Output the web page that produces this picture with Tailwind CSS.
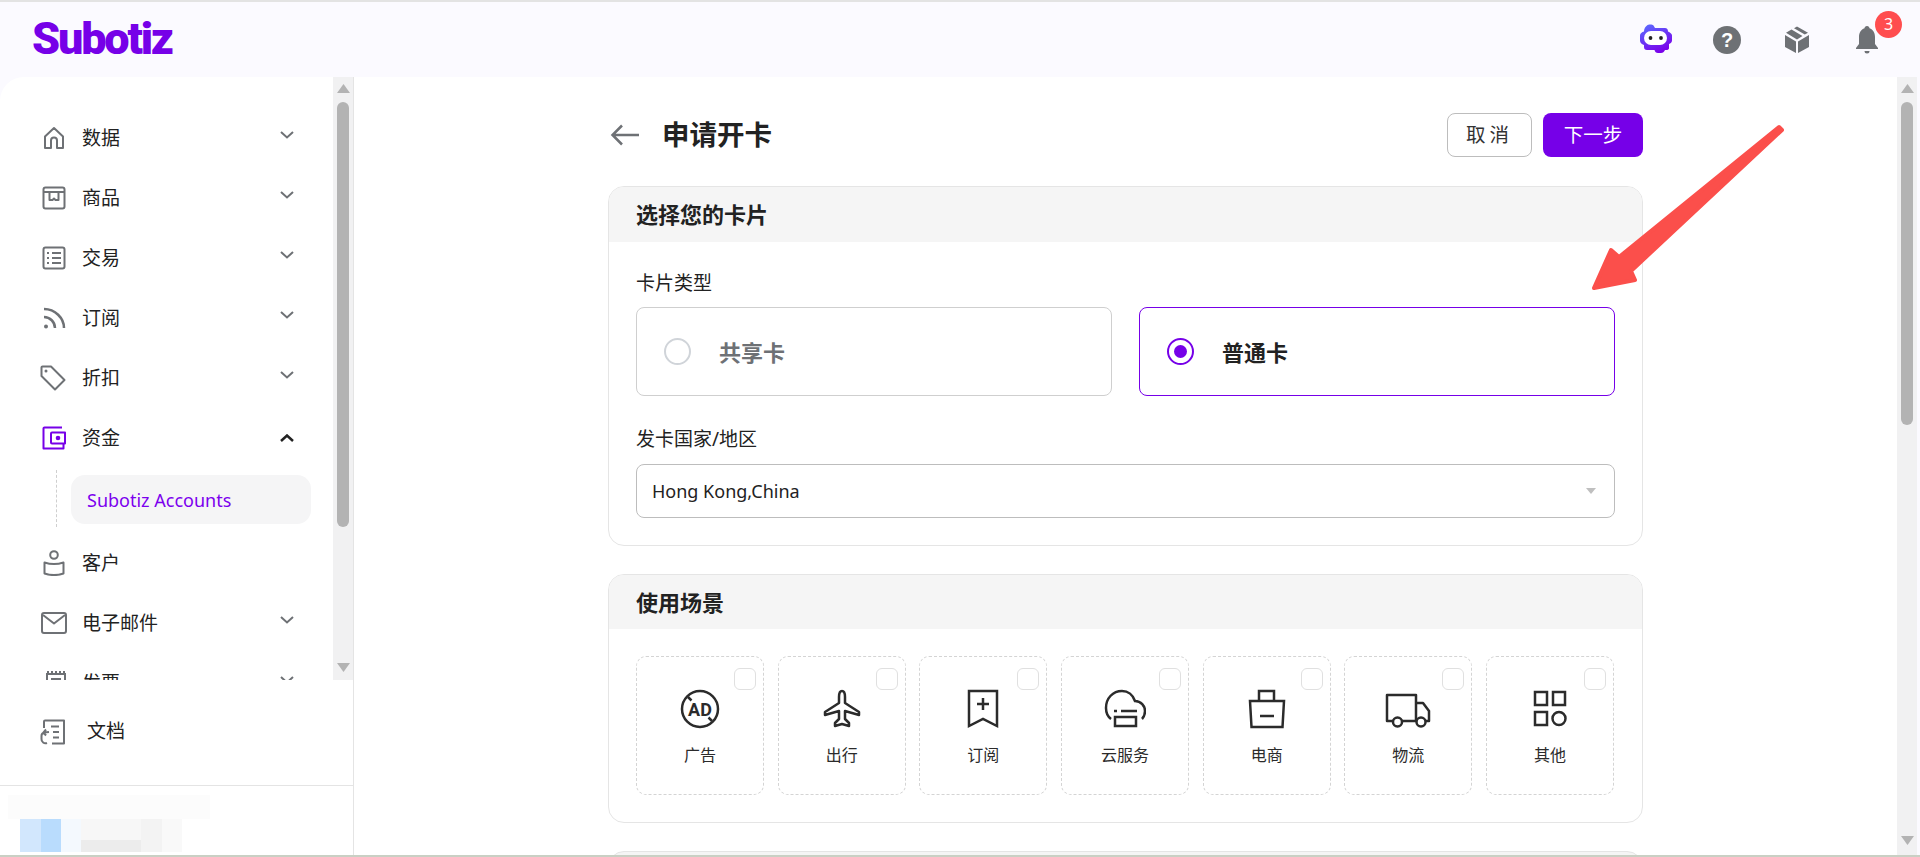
<!DOCTYPE html>
<html lang="zh-CN">
<head>
    <meta charset="UTF-8">
    <title>申请开卡 - Subotiz</title>
    <script src="https://cdn.jsdelivr.net/npm/@tailwindcss/browser@4"></script>
</head>
<body class="w-[1920px] h-[857px] overflow-hidden bg-[#fbfaff] text-[#222222] font-['Noto_Sans','Noto_Sans_CJK_SC',sans-serif]">
    <div class="h-[2px] bg-[#e3e3e3]"></div>

    <!-- Top bar -->
    <header class="h-[75px] flex items-center">
        <div class="ml-[32px] mt-[-2px] text-[45px] leading-none font-black tracking-[-2.200px] text-[#7600e8] font-['Roboto',sans-serif]">Subotiz</div>
        <div class="ml-auto flex items-center">
            <svg class="w-[32px] h-[29px] mr-[41px] mt-[-2px]" viewBox="0 0 32 29">
                <defs><linearGradient id="bot" x1="0.100" y1="0" x2="0.600" y2="1"><stop offset="0" stop-color="#5a6cff"/><stop offset="1" stop-color="#7a00ea"/></linearGradient></defs>
                <path d="M7 1.500C8 .500 12 0 13.500 1.500L15 4h10c2 0 3 1.500 3 3.500 2 1 4 2 4 4v5c0 2-1.500 3-3 3.500V24c0 1.500-1 2-3 2h-1c-1 2-2 3-4 3h-3c-2 0-3-1-3.500-3H7c-2 0-3-1-3-3v-2C1.500 20 0 18.500 0 16.500v-5C0 9.500 2 8 4 7.500 4 4.500 5.500 2.500 7 1.500z" fill="url(#bot)"/>
                <rect x="4" y="7" width="23" height="14" rx="7" fill="#fff"/>
                <circle cx="10.500" cy="14" r="1.900" fill="#222"/><circle cx="21" cy="14" r="1.900" fill="#222"/>
            </svg>
            <svg class="w-[28px] h-[28px] mr-[43px]" viewBox="0 0 28 28">
                <circle cx="14" cy="14" r="14" fill="#6e7175"/>
                <text x="14" y="21" text-anchor="middle" font-size="20" font-weight="700" fill="#fff" font-family="Liberation Sans">?</text>
            </svg>
            <svg class="w-[26px] h-[28px] mr-[45px]" viewBox="0 0 26 28">
                <path d="M1 9l11 6.500V27L1 21zM25 9l-11 6.500V27l11-6z" fill="#6e7175"/>
                <path d="M2 6.800 7.500 3.600 18.500 10 13 13.500zM10 2.200 13 .500l11 6.300-3.200 1.800z" fill="#6e7175"/>
            </svg>
            <div class="relative mr-[41px] w-[24px] h-[28px]">
                <svg class="w-[24px] h-[28px]" viewBox="0 0 24 28">
                    <path d="M12 0c1.500 0 2.500 1 2.500 2.300C18 3.500 20 7 20 11v7l3 4v1H1v-1l3-4v-7c0-4 2-7.500 5.500-8.700C9.500 1 10.500 0 12 0z" fill="#6e7175"/>
                    <path d="M9.500 25h5a2.500 2.500 0 0 1-5 0z" fill="#6e7175"/>
                </svg>
                <div class="absolute left-[20px] top-[-15px] w-[27px] h-[27px] rounded-full bg-[#ff4d4f] text-white text-[16px] leading-[27px] text-center">3</div>
            </div>
        </div>
    </header>

    <div class="h-[778px] flex">
        <!-- Sidebar -->
        <aside class="w-[354px] shrink-0 bg-white rounded-tl-[24px] border-r border-[#e4e4e4] flex flex-col">
            <div class="h-[603px] flex overflow-hidden">
                <nav class="w-[333px] pt-[31px] text-[19px] leading-[28px]">
                    <div class="h-[60px] flex items-center pl-[42px]">
                        <svg class="w-[24px] h-[24px] text-[#6e7175]" viewBox="0 0 24 24" fill="none" stroke="currentColor" stroke-width="2" stroke-linejoin="round"><path d="M3 10.500 12 2l9 8.500V22h-6v-7.500a3 3 0 0 0-6 0V22H3z"/></svg>
                        <span class="ml-[16px]">数据</span>
                        <svg class="ml-auto mr-[39px] mb-[6px] w-[14px] h-[8px] text-[#6e7175]" viewBox="0 0 14 8" fill="none" stroke="currentColor" stroke-width="2"><path d="m1 1 6 5.500L13 1"/></svg>
                    </div>
                    <div class="h-[60px] flex items-center pl-[42px]">
                        <svg class="w-[24px] h-[24px] text-[#6e7175]" viewBox="0 0 24 24" fill="none" stroke="currentColor" stroke-width="2" stroke-linejoin="round"><rect x="1.500" y="1.500" width="21" height="21" rx="2"/><path d="M1.500 6h21M7.500 6v8h3l1.500-1.500 1.500 1.500h3V6"/></svg>
                        <span class="ml-[16px]">商品</span>
                        <svg class="ml-auto mr-[39px] mb-[6px] w-[14px] h-[8px] text-[#6e7175]" viewBox="0 0 14 8" fill="none" stroke="currentColor" stroke-width="2"><path d="m1 1 6 5.500L13 1"/></svg>
                    </div>
                    <div class="h-[60px] flex items-center pl-[42px]">
                        <svg class="w-[24px] h-[24px] text-[#6e7175]" viewBox="0 0 24 24" fill="none" stroke="currentColor" stroke-width="2"><rect x="1.500" y="1.500" width="21" height="21" rx="2"/><path d="M10 7h9M10 12h9M10 17h9M5 7h2M5 12h2M5 17h2"/></svg>
                        <span class="ml-[16px]">交易</span>
                        <svg class="ml-auto mr-[39px] mb-[6px] w-[14px] h-[8px] text-[#6e7175]" viewBox="0 0 14 8" fill="none" stroke="currentColor" stroke-width="2"><path d="m1 1 6 5.500L13 1"/></svg>
                    </div>
                    <div class="h-[60px] flex items-center pl-[42px]">
                        <svg class="w-[24px] h-[24px] text-[#6e7175]" viewBox="0 0 24 24" fill="none" stroke="currentColor" stroke-width="2.500"><circle cx="4" cy="20.500" r="2" fill="currentColor" stroke="none"/><path d="M2 11c6 0 11 5 11 11M2 3c11 0 20 9 20 19"/></svg>
                        <span class="ml-[16px]">订阅</span>
                        <svg class="ml-auto mr-[39px] mb-[6px] w-[14px] h-[8px] text-[#6e7175]" viewBox="0 0 14 8" fill="none" stroke="currentColor" stroke-width="2"><path d="m1 1 6 5.500L13 1"/></svg>
                    </div>
                    <div class="h-[60px] flex items-center pl-[40px]">
                        <svg class="w-[26px] h-[26px] text-[#6e7175]" viewBox="0 0 26 26" fill="none" stroke="currentColor" stroke-width="2" stroke-linejoin="round"><path d="M1.500 2.500a1 1 0 0 1 1-1H11l13.500 13.500-9.500 9.500L1.500 11z"/><circle cx="6" cy="6" r="1.500" fill="currentColor" stroke="none"/></svg>
                        <span class="ml-[16px]">折扣</span>
                        <svg class="ml-auto mr-[39px] mb-[6px] w-[14px] h-[8px] text-[#6e7175]" viewBox="0 0 14 8" fill="none" stroke="currentColor" stroke-width="2"><path d="m1 1 6 5.500L13 1"/></svg>
                    </div>
                    <div class="h-[60px] flex items-center pl-[42px]">
                        <svg class="w-[25px] h-[24px] text-[#7600e8]" viewBox="0 0 25 24" fill="none" stroke="currentColor" stroke-width="2" stroke-linejoin="round"><path d="M20 1.500H2.500a1 1 0 0 0-1 1v20h20v-5"/><path d="M10 6.500h13v11H10a1 1 0 0 1-1-1v-9a1 1 0 0 1 1-1z"/><circle cx="16" cy="12" r="2.300" fill="currentColor" stroke="none"/></svg>
                        <span class="ml-[15px]">资金</span>
                        <svg class="ml-auto mr-[39px] mb-[1px] w-[14px] h-[8px] text-[#222222]" viewBox="0 0 14 8" fill="none" stroke="currentColor" stroke-width="2.500"><path d="m1 7 6-5.500L13 7"/></svg>
                    </div>
                    <div class="h-[65px] flex pl-[56px]">
                        <div class="mt-[2px] h-[57px] border-l border-dashed border-[#cfcfcf]"></div>
                        <div class="mt-[7px] ml-[14px] w-[240px] h-[49px] rounded-[14px] bg-[#f5f5f6] pl-[16px] text-[18px] leading-[50px] text-[#7c00ee]">Subotiz Accounts</div>
                    </div>
                    <div class="h-[60px] flex items-center pl-[42px]">
                        <svg class="w-[24px] h-[26px] text-[#6e7175]" viewBox="0 0 24 26" fill="none" stroke="currentColor" stroke-width="2" stroke-linejoin="round"><circle cx="12" cy="5" r="3.800"/><path d="M2.500 12.500c6 2 13 2 19 0v11c-6 2-13 2-19 0z"/></svg>
                        <span class="ml-[16px]">客户</span>
                    </div>
                    <div class="h-[60px] flex items-center pl-[41px]">
                        <svg class="w-[26px] h-[22px] text-[#6e7175]" viewBox="0 0 26 22" fill="none" stroke="currentColor" stroke-width="2" stroke-linejoin="round"><rect x="1" y="1" width="24" height="20" rx="2"/><path d="m2 3 11 8.500L24 3"/></svg>
                        <span class="ml-[15px]">电子邮件</span>
                        <svg class="ml-auto mr-[39px] mb-[6px] w-[14px] h-[8px] text-[#6e7175]" viewBox="0 0 14 8" fill="none" stroke="currentColor" stroke-width="2"><path d="m1 1 6 5.500L13 1"/></svg>
                    </div>
                    <div class="h-[60px] flex items-center pl-[46px]">
                        <svg class="w-[20px] h-[24px] text-[#6e7175]" viewBox="0 0 20 24" fill="none" stroke="currentColor" stroke-width="2"><path d="M1 3v20h18V3z"/><path d="M1 1h2M5 1h2M9 1h2M13 1h2M17 1h2M5 8h10M5 13h5"/></svg>
                        <span class="ml-[16px]">发票</span>
                        <svg class="ml-auto mr-[39px] mb-[6px] w-[14px] h-[8px] text-[#6e7175]" viewBox="0 0 14 8" fill="none" stroke="currentColor" stroke-width="2"><path d="m1 1 6 5.500L13 1"/></svg>
                    </div>
                </nav>
                <!-- Sidebar scrollbar -->
                <div class="w-[20px] bg-[#f1f1f2] flex flex-col items-center pt-[7px]">
                    <svg class="w-[13px] h-[9px] shrink-0" viewBox="0 0 13 9"><path d="M6.500 0 13 9H0z" fill="#b3b3b3"/></svg>
                    <div class="mt-[9px] w-[12px] h-[425px] rounded-full bg-[#b3b3b3]"></div>
                    <svg class="mt-auto mb-[8px] w-[13px] h-[9px] shrink-0" viewBox="0 0 13 9"><path d="M0 0h13L6.500 9z" fill="#b3b3b3"/></svg>
                </div>
            </div>
            <div class="h-[106px] shrink-0 flex items-center pl-[40px] pb-[2px] text-[19px] border-b border-[#e4e4e4]">
                <svg class="w-[26px] h-[26px] text-[#6e7175]" viewBox="0 0 26 26" fill="none" stroke="currentColor" stroke-width="2" stroke-linejoin="round"><path d="M4 9V2.500a1 1 0 0 1 1-1h19v23H12"/><path d="M11 7.500h8M13 13h6M13 18.500h6"/><path d="M9 13 4 13.500a3.500 3.500 0 0 0-2.500 3.500v3a4 4 0 0 0 5.500 4M6 10.500 3.500 13.500 6 16.500"/></svg>
                <span class="ml-[21px]">文档</span>
            </div>
            <!-- Blurred account block -->
            <div class="flex-1 pl-[8px] pt-[9px]">
                <div class="w-[202px] h-[24px] bg-[#fcfcfc]"></div>
                <div class="ml-[12px] flex h-[21px]">
                    <div class="w-[21px] bg-[#d2e7fd]"></div><div class="w-[20px] bg-[#b9dcfd]"></div><div class="w-[20px] bg-[#f4f9fe]"></div><div class="w-[60px] bg-[#f7f7f7]"></div><div class="w-[21px] bg-[#f3f3f3]"></div><div class="w-[20px] bg-[#f9f9f9]"></div>
                </div>
                <div class="ml-[12px] flex h-[12px]">
                    <div class="w-[21px] bg-[#d2e7fd]"></div><div class="w-[20px] bg-[#b9dcfd]"></div><div class="w-[20px] bg-[#f4f9fe]"></div><div class="w-[60px] bg-[#ececec]"></div><div class="w-[21px] bg-[#f3f3f3]"></div><div class="w-[20px] bg-[#f9f9f9]"></div>
                </div>
            </div>
        </aside>

        <!-- Main -->
        <main class="flex-1 bg-white flex overflow-hidden">
            <div class="relative w-[1543px] pl-[254px] pt-[36px]">
                <div class="w-[1035px] h-[44px] flex items-center">
                    <svg class="ml-[2px] w-[29px] h-[22px] text-[#6e7175]" viewBox="0 0 29 22" fill="none" stroke="currentColor" stroke-width="2.500"><path d="M29 11H3M12 1.500 2.500 11l9.500 9.500"/></svg>
                    <h1 class="ml-[23px] text-[27.500px] font-bold leading-none">申请开卡</h1>
                    <button class="ml-auto w-[85px] h-[44px] rounded-[8px] border border-[#bdbdbd] bg-white text-[19.500px] tracking-[4px] text-[#333333]">取消</button>
                    <button class="ml-[11px] w-[100px] h-[44px] rounded-[8px] bg-[#7600e8] text-[19.500px] text-white">下一步</button>
                </div>

                <section class="mt-[29px] w-[1035px] rounded-[16px] border border-[#e5e5e5] overflow-hidden">
                    <h2 class="h-[55px] bg-[#f5f5f5] pl-[27px] text-[22px] leading-[55px] font-bold">选择您的卡片</h2>
                    <div class="px-[27px] pt-[27px] pb-[27px] w-[1033px]">
                        <div class="text-[19px] leading-[28px]">卡片类型</div>
                        <div class="mt-[10px] w-[979px] flex gap-[27px]">
                            <div class="flex-1 h-[89px] rounded-[8px] border border-[#cfcfcf] flex items-center pl-[27px]">
                                <div class="w-[27px] h-[27px] rounded-full border-2 border-[#d0d4d9]"></div>
                                <span class="ml-[28px] mt-[2px] text-[22px] font-bold text-[#6e7175]">共享卡</span>
                            </div>
                            <div class="flex-1 h-[89px] rounded-[8px] border border-[#7600e8] flex items-center pl-[27px]">
                                <div class="w-[27px] h-[27px] rounded-full border-2 border-[#7600e8] flex items-center justify-center">
                                    <div class="w-[13px] h-[13px] rounded-full bg-[#7600e8]"></div>
                                </div>
                                <span class="ml-[28px] mt-[2px] text-[22px] font-bold">普通卡</span>
                            </div>
                        </div>
                        <div class="mt-[29px] text-[19px] leading-[28px]">发卡国家/地区</div>
                        <div class="mt-[11px] w-[979px] h-[54px] rounded-[8px] border border-[#bdbdbd] flex items-center pl-[15px] pr-[18px] text-[18px]">
                            <span>Hong Kong,China</span>
                            <svg class="ml-auto w-[10px] h-[6px]" viewBox="0 0 10 6"><path d="M0 0h10L5 6z" fill="#bfbfbf"/></svg>
                        </div>
                    </div>
                </section>

                <section class="mt-[28px] w-[1035px] rounded-[16px] border border-[#e5e5e5] overflow-hidden">
                    <h2 class="h-[54px] bg-[#f5f5f5] pl-[27px] text-[22px] leading-[54px] font-bold">使用场景</h2>
                    <div class="px-[27px] py-[27px] w-[1033px]">
                        <div class="w-[978px] grid grid-cols-7 gap-[13.500px] text-[16px] leading-[22px] text-[#2b2b2b]">
                            <div class="relative h-[139px] rounded-[10px] border border-dashed border-[#d4d4d4] flex flex-col items-center pt-[32px]">
                                <div class="absolute right-[7px] top-[11px] w-[22px] h-[22px] rounded-[6px] border border-[#e0e0e0]"></div>
                                <svg class="w-[40px] h-[40px]" viewBox="0 0 40 40" fill="none" stroke="#2b2b2b" stroke-width="2.500"><circle cx="20" cy="20" r="18"/><path d="m8 8 3.500 3.500M28.500 28.500 32 32"/><text x="20" y="26.500" text-anchor="middle" font-size="18" font-weight="700" fill="#2b2b2b" stroke="none" font-family="Roboto">AD</text></svg>
                                <span class="mt-[15px]">广告</span>
                            </div>
                            <div class="relative h-[139px] rounded-[10px] border border-dashed border-[#d4d4d4] flex flex-col items-center pt-[32px]">
                                <div class="absolute right-[7px] top-[11px] w-[22px] h-[22px] rounded-[6px] border border-[#e0e0e0]"></div>
                                <svg class="w-[40px] h-[40px]" viewBox="0 0 40 40" fill="none" stroke="#2b2b2b" stroke-width="2.500" stroke-linejoin="round"><path d="M20 2c2 0 3 3 3 6v6l14 9v3l-14-4v8l4 4v3l-7-2-7 2v-3l4-4v-8L3 26v-3l14-9V8c0-3 1-6 3-6z"/></svg>
                                <span class="mt-[15px]">出行</span>
                            </div>
                            <div class="relative h-[139px] rounded-[10px] border border-dashed border-[#d4d4d4] flex flex-col items-center pt-[32px]">
                                <div class="absolute right-[7px] top-[11px] w-[22px] h-[22px] rounded-[6px] border border-[#e0e0e0]"></div>
                                <svg class="w-[40px] h-[40px]" viewBox="0 0 40 40" fill="none" stroke="#2b2b2b" stroke-width="2.500"><path d="M6 2h28v35L20 30 6 37z"/><path d="M20 9v12M14 15h12"/></svg>
                                <span class="mt-[15px]">订阅</span>
                            </div>
                            <div class="relative h-[139px] rounded-[10px] border border-dashed border-[#d4d4d4] flex flex-col items-center pt-[32px]">
                                <div class="absolute right-[7px] top-[11px] w-[22px] h-[22px] rounded-[6px] border border-[#e0e0e0]"></div>
                                <svg class="w-[42px] h-[40px]" viewBox="0 0 42 40" fill="none" stroke="#2b2b2b" stroke-width="2.500"><path d="M7 30C3 27 2 23 2 19 2 9 9 2 18 2c6 0 11 4 13 10 6 0 10 5 10 10 0 3-1 6-3 8"/><path d="M10 22h3M17 22h16"/><rect x="11" y="28" width="21" height="9"/></svg>
                                <span class="mt-[15px]">云服务</span>
                            </div>
                            <div class="relative h-[139px] rounded-[10px] border border-dashed border-[#d4d4d4] flex flex-col items-center pt-[32px]">
                                <div class="absolute right-[7px] top-[11px] w-[22px] h-[22px] rounded-[6px] border border-[#e0e0e0]"></div>
                                <svg class="w-[38px] h-[40px]" viewBox="0 0 38 40" fill="none" stroke="#2b2b2b" stroke-width="2.500"><path d="M2 12h34l-1.500 26h-31z"/><path d="M11 12V2h15v10M12 27h14"/></svg>
                                <span class="mt-[15px]">电商</span>
                            </div>
                            <div class="relative h-[139px] rounded-[10px] border border-dashed border-[#d4d4d4] flex flex-col items-center pt-[32px]">
                                <div class="absolute right-[7px] top-[11px] w-[22px] h-[22px] rounded-[6px] border border-[#e0e0e0]"></div>
                                <svg class="w-[46px] h-[40px]" viewBox="0 0 46 40" fill="none" stroke="#2b2b2b" stroke-width="2.500" stroke-linejoin="round"><path d="M8 32H2V6h29v26H17M31 14h7l6 8v10h-4M31 32h1"/><circle cx="12.500" cy="33" r="4.500"/><circle cx="36" cy="33" r="4.500"/></svg>
                                <span class="mt-[15px]">物流</span>
                            </div>
                            <div class="relative h-[139px] rounded-[10px] border border-dashed border-[#d4d4d4] flex flex-col items-center pt-[32px]">
                                <div class="absolute right-[7px] top-[11px] w-[22px] h-[22px] rounded-[6px] border border-[#e0e0e0]"></div>
                                <svg class="w-[40px] h-[40px]" viewBox="0 0 40 40" fill="none" stroke="#2b2b2b" stroke-width="2.500"><rect x="5" y="3" width="12" height="13"/><rect x="23" y="3" width="12" height="13"/><rect x="5" y="23" width="12" height="13"/><circle cx="29" cy="29.500" r="6.500"/></svg>
                                <span class="mt-[15px]">其他</span>
                            </div>
                        </div>
                    </div>
                </section>

                <section class="mt-[28px] w-[1035px] h-[100px] rounded-[16px] border border-[#e5e5e5] bg-[#f5f5f5]"></section>

                <!-- Annotation arrow drawn over the page -->
                <svg class="absolute left-0 top-0 w-[1543px] h-[300px] pointer-events-none" viewBox="354 77 1543 300">
                    <path d="M1779 127 1782 130 1631 271 1635 280 1594 288 1611 250 1619 257z" fill="#fb4f4b" stroke="#fb4f4b" stroke-width="4" stroke-linejoin="round"/>
                </svg>
            </div>
            <!-- Page scrollbar -->
            <div class="w-[20px] bg-[#f1f1f2] flex flex-col items-center pt-[7px]">
                <svg class="w-[13px] h-[9px] shrink-0" viewBox="0 0 13 9"><path d="M6.500 0 13 9H0z" fill="#b3b3b3"/></svg>
                <div class="mt-[9px] w-[12px] h-[323px] rounded-full bg-[#b3b3b3]"></div>
                <svg class="mt-auto mb-[10px] w-[13px] h-[9px] shrink-0" viewBox="0 0 13 9"><path d="M0 0h13L6.500 9z" fill="#b3b3b3"/></svg>
            </div>
            <div class="flex-1 bg-[#fbfaff]"></div>
        </main>
    </div>
    <div class="h-[2px] bg-[#c9d0c4]"></div>
</body>
</html>
